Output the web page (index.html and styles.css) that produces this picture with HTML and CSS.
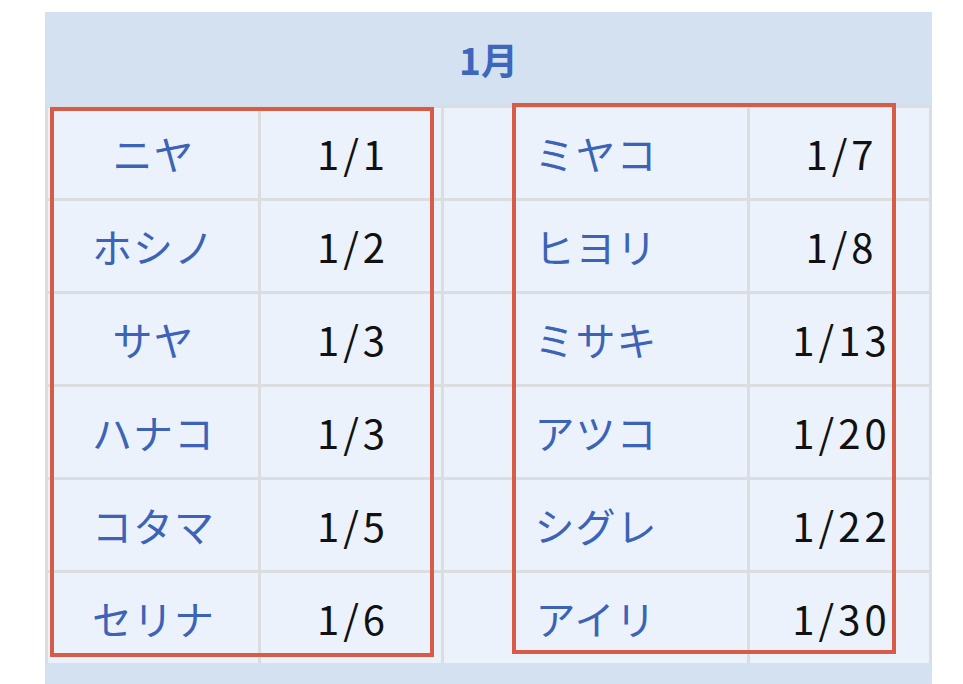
FILE: index.html
```html
<!DOCTYPE html>
<html lang="ja">
<head>
<meta charset="utf-8">
<link rel="stylesheet" href="styles.css">
</head>
<body>
<div class="page">
  <div class="sheet">
    <div class="month">1月</div>
    <div class="grid">
      <div class="cell name">ニヤ</div><div class="cell date">1/1</div><div class="cell name">ミヤコ</div><div class="cell date">1/7</div>
      <div class="cell name">ホシノ</div><div class="cell date">1/2</div><div class="cell name">ヒヨリ</div><div class="cell date">1/8</div>
      <div class="cell name">サヤ</div><div class="cell date">1/3</div><div class="cell name">ミサキ</div><div class="cell date">1/13</div>
      <div class="cell name">ハナコ</div><div class="cell date">1/3</div><div class="cell name">アツコ</div><div class="cell date">1/20</div>
      <div class="cell name">コタマ</div><div class="cell date">1/5</div><div class="cell name">シグレ</div><div class="cell date">1/22</div>
      <div class="cell name">セリナ</div><div class="cell date">1/6</div><div class="cell name">アイリ</div><div class="cell date">1/30</div>
    </div>
    <div class="footer"></div>
    <div class="mark mark-left"></div>
    <div class="mark mark-right"></div>
  </div>
</div>
</body>
</html>
```
FILE: styles.css
```css
html, body {
  margin: 0;
  padding: 0;
  background: #ffffff;
}
.page {
  width: 963px;
  height: 684px;
  overflow: hidden;
  padding-top: 12px;
  box-sizing: border-box;
  font-family: "Noto Sans CJK JP", "Noto Sans", sans-serif;
}
.sheet {
  position: relative;
  margin-left: 45px;
  width: 887px;
}
.month {
  height: 93px;
  background: #d4e1f0;
  color: #3e66bd;
  font-weight: 700;
  font-size: 37px;
  display: flex;
  align-items: center;
  justify-content: center;
  padding-top: 0;
  box-sizing: border-box;
}
.grid {
  display: grid;
  grid-template-columns: 210px 180px 303px 179px;
  grid-auto-rows: 90px;
  gap: 3px;
  padding: 3px 3px 0 3px;
  background: #dbdde1;
}
.cell {
  background: #ecf2fc;
  display: flex;
  align-items: center;
  justify-content: center;
  line-height: 1;
}
.name {
  color: #3c63b6;
  font-size: 40px;
  letter-spacing: 1px;
  padding-left: 1px;
}
.date {
  color: #111111;
  font-size: 40px;
  letter-spacing: 4px;
  padding-left: 4px;
}
.footer {
  height: 30px;
  background: #d4e1f0;
}
.mark {
  position: absolute;
  border: 4.5px solid #d85b47;
  box-sizing: border-box;
}
.mark-left {
  left: 5px;
  top: 95px;
  width: 384px;
  height: 550px;
}
.mark-right {
  left: 467px;
  top: 91px;
  width: 384px;
  height: 551px;
}
```
